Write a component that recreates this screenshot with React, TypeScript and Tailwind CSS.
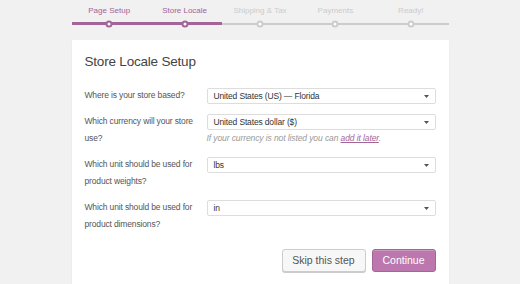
const steps = [
    { label: "Page Setup", done: true },
    { label: "Store Locale", done: true },
    { label: "Shipping & Tax", done: false },
    { label: "Payments", done: false },
    { label: "Ready!", done: false },
];

function Select({ value }: { value: string }) {
    return (
        <div className="flex h-[16px] items-center justify-between rounded-[2px] border border-[#dddddd] bg-white pl-[6px] pr-[6px] text-[8.5px] tracking-[-0.15px] text-[#333]">
            <span>{value}</span>
            <svg width="5" height="3" viewBox="0 0 5 3" className="fill-[#555]">
                <path d="M0 0h5L2.5 3z" />
            </svg>
        </div>
    );
}

function Row({
    label,
    value,
    children,
}: {
    label: React.ReactNode;
    value: string;
    children?: React.ReactNode;
}) {
    return (
        <div className="grid grid-cols-[122px_229px] items-start">
            <p className="pr-2 text-[8.5px] leading-[17px] tracking-[-0.15px] text-[#555]">{label}</p>
            <div className="pt-[1px]">
                <Select value={value} />
                {children}
            </div>
        </div>
    );
}

export default function App() {
    return (
        <div
            className="h-[284px] overflow-hidden bg-[#f1f1f1]"
            style={{ fontFamily: '"Liberation Sans", Arial, sans-serif' }}
        >
            <ol className="mx-auto grid w-[377px] grid-cols-5 pt-[5px]">
                {steps.map((step) => (
                    <li key={step.label} className="flex flex-col items-center">
                        <span
                            className={
                                step.done
                                    ? "text-[8px] leading-[12px] text-[#a46497]"
                                    : "text-[8px] leading-[12px] text-[#cccccc]"
                            }
                        >
                            {step.label}
                        </span>
                        <div className="relative mt-[5px] flex h-[3px] w-full items-center">
                            <div
                                className={
                                    step.done
                                        ? "h-[3px] w-full bg-[#a46497]"
                                        : "h-[2px] w-full bg-[#cccccc]"
                                }
                            />
                            <span
                                className={
                                    step.done
                                        ? "absolute left-1/2 top-1/2 size-[7px] -translate-x-1/2 -translate-y-1/2 rounded-full border-2 border-[#a46497] bg-white"
                                        : "absolute left-1/2 top-1/2 size-[7px] -translate-x-1/2 -translate-y-1/2 rounded-full border-2 border-[#cccccc] bg-white"
                                }
                            />
                        </div>
                    </li>
                ))}
            </ol>

            <section className="mx-auto mt-[15px] h-[260px] w-[377px] bg-white px-[13px] pt-[12px] shadow-[0_1px_2px_rgba(0,0,0,0.05)]">
                <h1 className="text-[13.5px] leading-[20px] tracking-[-0.2px] text-[#444]">Store Locale Setup</h1>

                <div className="mt-[15px] flex flex-col gap-[9px]">
                    <Row label="Where is your store based?" value="United States (US) — Florida" />
                    <Row label="Which currency will your store use?" value="United States dollar ($)">
                        <p className="mt-[1px] text-[8.5px] italic leading-[14px] tracking-[-0.1px] text-[#999]">
                            If your currency is not listed you can{" "}
                            <a className="text-[#a46497] underline">add it later</a>.
                        </p>
                    </Row>
                    <Row label="Which unit should be used for product weights?" value="lbs" />
                    <Row label="Which unit should be used for product dimensions?" value="in" />
                </div>

                <div className="mt-[16px] flex justify-end gap-[6px]">
                    <button className="h-[23px] w-[84px] rounded-[3px] border border-[#cccccc] bg-[#f7f7f7] text-[10.5px] text-[#555] shadow-[0_1px_0_#cccccc]">
                        Skip this step
                    </button>
                    <button className="h-[23px] w-[64px] rounded-[3px] border border-[#a36597] bg-[#bb77ae] text-[10.5px] text-white shadow-[inset_0_1px_0_rgba(255,255,255,0.25)]">
                        Continue
                    </button>
                </div>
            </section>
        </div>
    );
}
